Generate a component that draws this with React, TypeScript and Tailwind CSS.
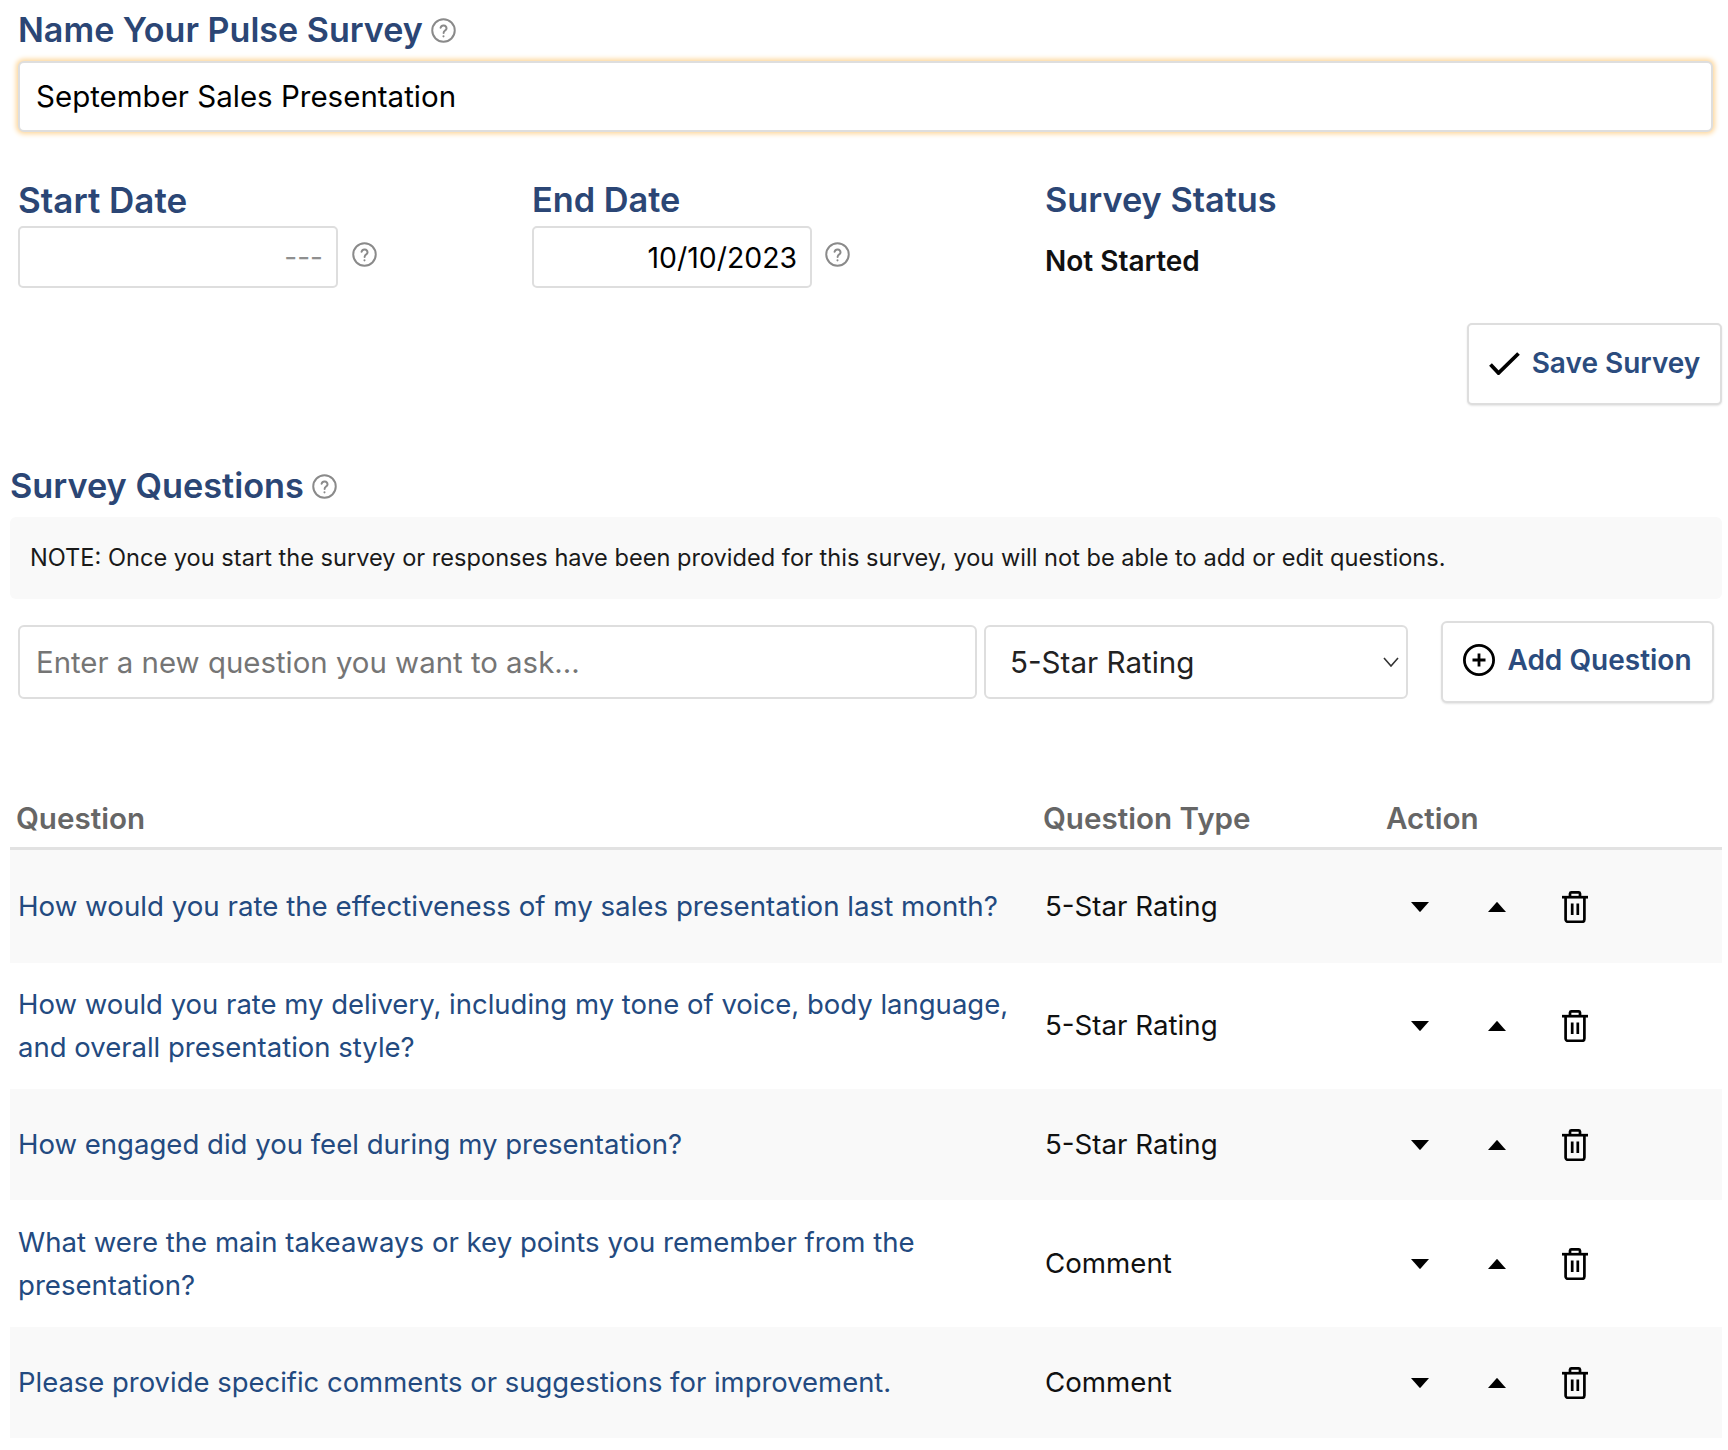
const questions = [
  { text: "How would you rate the effectiveness of my sales presentation last month?", type: "5-Star Rating", h: "h-[113px]", size: "text-[27.7px]", shaded: true },
  { text: "How would you rate my delivery, including my tone of voice, body language, and overall presentation style?", type: "5-Star Rating", h: "h-[126px]", size: "text-[27.5px]", shaded: false },
  { text: "How engaged did you feel during my presentation?", type: "5-Star Rating", h: "h-[111px]", size: "text-[27.55px]", shaded: true },
  { text: "What were the main takeaways or key points you remember from the presentation?", type: "Comment", h: "h-[127px]", size: "text-[27.6px]", shaded: false },
  { text: "Please provide specific comments or suggestions for improvement.", type: "Comment", h: "h-[111px]", size: "text-[27.45px]", shaded: true },
];

function HelpIcon({ className = "" }: { className?: string }) {
  return (
    <svg viewBox="0 0 24 24" className={`h-[25px] w-[25px] shrink-0 ${className}`} fill="none" stroke="#8a8a8a" strokeWidth="1.9">
      <circle cx="12" cy="12" r="10.8" />
      <path d="M9.2 9.4a2.9 2.9 0 0 1 5.7.6c0 1.9-2.8 2.3-2.8 4.3" strokeLinecap="round" />
      <circle cx="12" cy="17.6" r="1" fill="#8a8a8a" stroke="none" />
    </svg>
  );
}

function Label({ children, size = "text-[34.3px]" }: { children: React.ReactNode; size?: string }) {
  return <h2 className={`${size} leading-[40px] font-semibold text-[#2b4675]`}>{children}</h2>;
}

function TrashIcon() {
  return (
    <svg viewBox="0 0 26 32" className="h-[32px] w-[26px]" fill="none" stroke="#000" strokeWidth="2.7">
      <path d="M0 6.2h26" />
      <path d="M8 6V2.6A1.4 1.4 0 0 1 9.4 1.4h7.2A1.4 1.4 0 0 1 18 2.6V6" />
      <path d="M3.6 6.2v22.4a2.2 2.2 0 0 0 2.2 2.2h14.4a2.2 2.2 0 0 0 2.2-2.2V6.2" />
      <path d="M10.2 12.5v11.5M15.8 12.5v11.5" />
    </svg>
  );
}

function ActionIcons() {
  return (
    <div className="ml-[25px] flex items-center">
      <svg viewBox="0 0 18 10" className="h-[10px] w-[18px]" fill="#000">
        <path d="M0 0h18L9.6 9.6a.8.8 0 0 1-1.2 0z" />
      </svg>
      <svg viewBox="0 0 18 10" className="ml-[59px] h-[10px] w-[18px]" fill="#000">
        <path d="M0 10h18L9.6.4a.8.8 0 0 0-1.2 0z" />
      </svg>
      <div className="ml-[56px]">
        <TrashIcon />
      </div>
    </div>
  );
}

export default function App() {
  return (
    <div className="h-[1450px] w-[1728px] bg-white font-['Inter',sans-serif] text-black">
      <div className="pt-[10px] pr-[15px] pl-[18px]">
        <div className="flex items-center gap-[8px]">
          <Label size="text-[34.1px]">Name Your Pulse Survey</Label>
          <HelpIcon />
        </div>
        <input
          readOnly
          value="September Sales Presentation"
          className="mt-[11px] block h-[71px] w-full rounded-[6px] border-2 border-[#dedede] bg-white px-[16px] pb-[2px] text-[29.5px] text-black shadow-[0_0_5px_2px_#fdd79c] outline-none"
        />

        <div className="mt-[48px] grid grid-cols-[514px_513px_1fr]">
          <div>
            <Label size="text-[35px]">Start Date</Label>
            <div className="mt-[6px] flex items-center gap-[14px]">
              <input
                readOnly
                placeholder="---"
                className="h-[62px] w-[320px] rounded-[5px] border-2 border-[#dedede] bg-white px-[13px] text-right text-[28px] outline-none placeholder:text-[#8f8f8f]"
              />
              <HelpIcon className="-mt-[5px]" />
            </div>
          </div>
          <div>
            <Label>End Date</Label>
            <div className="mt-[6px] flex items-center gap-[13px]">
              <input
                readOnly
                value="10/10/2023"
                className="h-[62px] w-[280px] rounded-[5px] border-2 border-[#dedede] bg-white px-[13px] text-right text-[28.4px] text-black outline-none"
              />
              <HelpIcon className="-mt-[5px]" />
            </div>
          </div>
          <div>
            <Label>Survey Status</Label>
            <p className="mt-[21px] text-[28px] leading-[40px] font-semibold text-[#111]">Not Started</p>
          </div>
        </div>
      </div>

      <div className="mt-[35px] flex justify-end pr-[6px]">
        <button className="flex h-[82px] w-[255px] items-center justify-center gap-[12px] rounded-[5px] border-2 border-[#dedede] bg-white shadow-[0_1px_2px_#e5e5e5]">
          <svg viewBox="0 0 31 23" className="-mt-[2px] h-[23px] w-[31px]" fill="none" stroke="#000" strokeWidth="3.8">
            <path d="M1.5 12.5l8 8.5L29.5 1.5" />
          </svg>
          <span className="-mt-[3px] text-[28px] font-semibold text-[#2b4c7e]">Save Survey</span>
        </button>
      </div>

      <div className="pr-[6px] pl-[10px]">
        <div className="mt-[61px] flex items-center gap-[8px]">
          <Label>Survey Questions</Label>
          <HelpIcon />
        </div>
        <div className="mt-[11px] flex h-[82px] items-center rounded-[6px] bg-[#f9f9f9] pl-[20px]">
          <p className="text-[23.6px] text-[#1a1a1a]">
            NOTE: Once you start the survey or responses have been provided for this survey, you will not be able to add or edit questions.
          </p>
        </div>

        <div className="mt-[22px] flex items-center pl-[8px]">
          <input
            readOnly
            placeholder="Enter a new question you want to ask..."
            className="h-[74px] w-[959px] rounded-[6px] border-2 border-[#dedede] bg-white px-[16px] text-[29.4px] outline-none placeholder:text-[#757575]"
          />
          <div className="relative ml-[7px] flex h-[74px] w-[424px] items-center rounded-[6px] border-2 border-[#dedede] bg-white pl-[24px] text-[29.6px] text-[#222]">
            5-Star Rating
            <svg viewBox="0 0 16 10" className="absolute top-[30px] right-[7px] h-[10px] w-[16px]" fill="none" stroke="#333" strokeWidth="1.6">
              <path d="M1 1l7 8 7-8" />
            </svg>
          </div>
          <button className="ml-[33px] flex h-[82px] w-[273px] items-center justify-center gap-[12px] rounded-[6px] border-2 border-[#dedede] bg-white shadow-[0_1px_2px_#e5e5e5]">
            <svg viewBox="0 0 32 32" className="-mt-[4px] h-[32px] w-[32px]" fill="none" stroke="#000" strokeWidth="2.8">
              <circle cx="16" cy="16" r="14.6" />
              <path d="M16 9.5v13M9.5 16h13" />
            </svg>
            <span className="-mt-[5px] text-[28px] font-semibold text-[#2b4c7e]">Add Question</span>
          </button>
        </div>

        <div className="mt-[97px] grid h-[50px] grid-cols-[1033px_343px_1fr] items-start border-b-[3px] border-[#e2e2e2] text-[29.6px] leading-[36px] font-semibold text-[#666]">
          <div className="pl-[6px]">Question</div>
          <div>Question Type</div>
          <div>Action</div>
        </div>

        {questions.map((q) => (
          <div
            key={q.text}
            className={`grid grid-cols-[1035px_341px_1fr] items-center ${q.h} ${q.shaded ? "bg-[#f9f9f9]" : "bg-white"}`}
          >
            <div className={`pr-[20px] pl-[8px] ${q.size} leading-[43px] text-[#234a80]`}>{q.text}</div>
            <div className="text-[27.7px] text-[#111]">{q.type}</div>
            <ActionIcons />
          </div>
        ))}
      </div>
    </div>
  );
}
